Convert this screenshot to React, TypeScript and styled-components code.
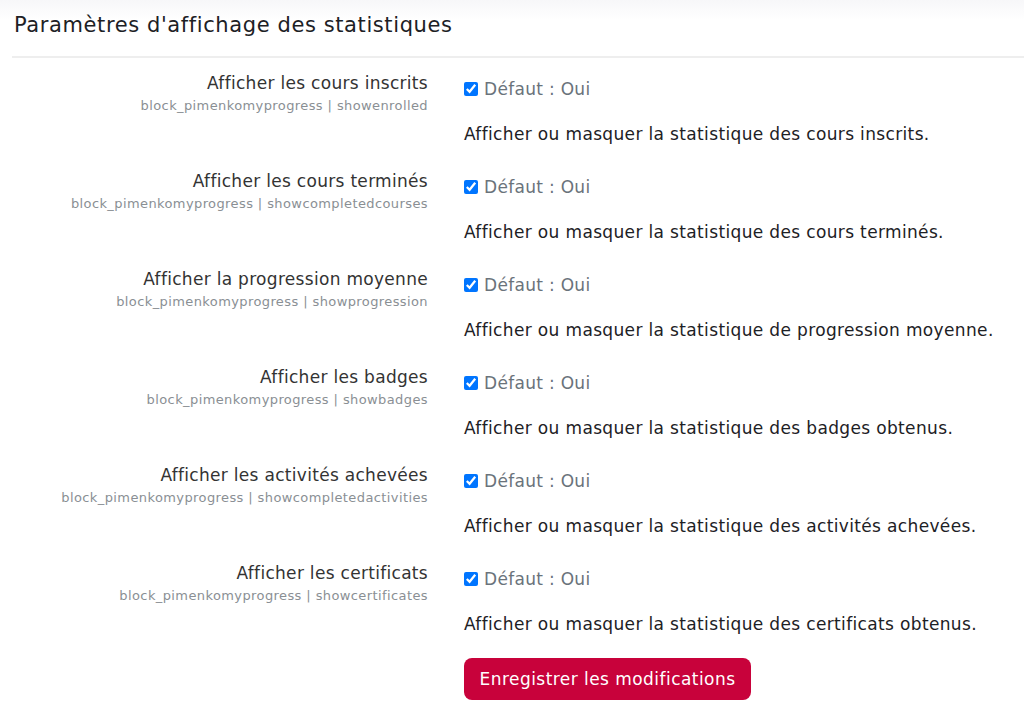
import styled, { createGlobalStyle } from 'styled-components';

const GlobalStyle = createGlobalStyle`
	html, body {
		margin: 0;
		padding: 0;
		background: #fff;
	}
	body {
		font-family: 'DejaVu Sans', 'Open Sans', sans-serif;
		color: #1d2125;
		letter-spacing: 0.3px;
	}
`;

const Page = styled.div`
	background: linear-gradient(#f7f7f9 0, #fff 20px);
	padding: 10px 0 0 12px;
	width: 1012px;
	height: 700px;
	overflow: hidden;
`;

const Heading = styled.h3`
	border-bottom: 2px solid #eeeeee;
	color: #1d2125;
	font-size: 21px;
	font-weight: 400;
	letter-spacing: 0.6px;
	margin: 0;
	padding: 0 0 16px 2px;
	line-height: 30px;
`;

const SettingList = styled.div`
	display: flex;
	flex-direction: column;
	padding-top: 12px;
`;

const SettingRow = styled.div`
	display: grid;
	grid-template-columns: 416px 1fr;
	column-gap: 36px;
	height: 98px;
`;

const LabelCell = styled.div`
	text-align: right;
`;

const SettingTitle = styled.label`
	display: block;
	color: #333;
	font-size: 17px;
	line-height: 26px;
`;

const SettingKey = styled.span`
	display: block;
	color: #8a8f94;
	font-size: 13px;
	letter-spacing: 0.4px;
	line-height: 20px;
`;

const ControlCell = styled.div`
	display: flex;
	flex-direction: column;
	padding-top: 5px;
`;

const DefaultLine = styled.label`
	display: flex;
	align-items: center;
	gap: 6px;
	color: #6a737b;
	font-size: 17px;
	line-height: 28px;
	height: 28px;
`;

const Check = styled.input`
	margin: 0;
	width: 14px;
	height: 14px;
`;

const Description = styled.p`
	margin: 18px 0 0;
	color: #1d2125;
	font-size: 17px;
	letter-spacing: 0.35px;
	line-height: 26px;
`;

const SaveRow = styled.div`
	display: grid;
	grid-template-columns: 416px 1fr;
	column-gap: 36px;
`;

const SaveButton = styled.button`
	justify-self: start;
	grid-column: 2;
	background: #c8023b;
	border: none;
	border-radius: 8px;
	color: #fff;
	cursor: pointer;
	font-family: inherit;
	font-size: 17px;
	letter-spacing: 0.45px;
	height: 42px;
	width: 287px;
	padding: 0;
`;

const settings = [
	{ title: 'Afficher les cours inscrits', key: 'showenrolled', desc: 'des cours inscrits' },
	{ title: 'Afficher les cours terminés', key: 'showcompletedcourses', desc: 'des cours terminés' },
	{ title: 'Afficher la progression moyenne', key: 'showprogression', desc: 'de progression moyenne' },
	{ title: 'Afficher les badges', key: 'showbadges', desc: 'des badges obtenus' },
	{ title: 'Afficher les activités achevées', key: 'showcompletedactivities', desc: 'des activités achevées' },
	{ title: 'Afficher les certificats', key: 'showcertificates', desc: 'des certificats obtenus' },
];

function App() {
	return (
		<>
			<GlobalStyle />
			<Page>
				<Heading>Paramètres d'affichage des statistiques</Heading>
				<SettingList>
					{settings.map((s) => (
						<SettingRow key={s.key}>
							<LabelCell>
								<SettingTitle htmlFor={s.key}>{s.title}</SettingTitle>
								<SettingKey>block_pimenkomyprogress | {s.key}</SettingKey>
							</LabelCell>
							<ControlCell>
								<DefaultLine>
									<Check type="checkbox" id={s.key} defaultChecked />
									Défaut : Oui
								</DefaultLine>
								<Description>Afficher ou masquer la statistique {s.desc}.</Description>
							</ControlCell>
						</SettingRow>
					))}
					<SaveRow>
						<SaveButton>Enregistrer les modifications</SaveButton>
					</SaveRow>
				</SettingList>
			</Page>
		</>
	);
}

export default App;
